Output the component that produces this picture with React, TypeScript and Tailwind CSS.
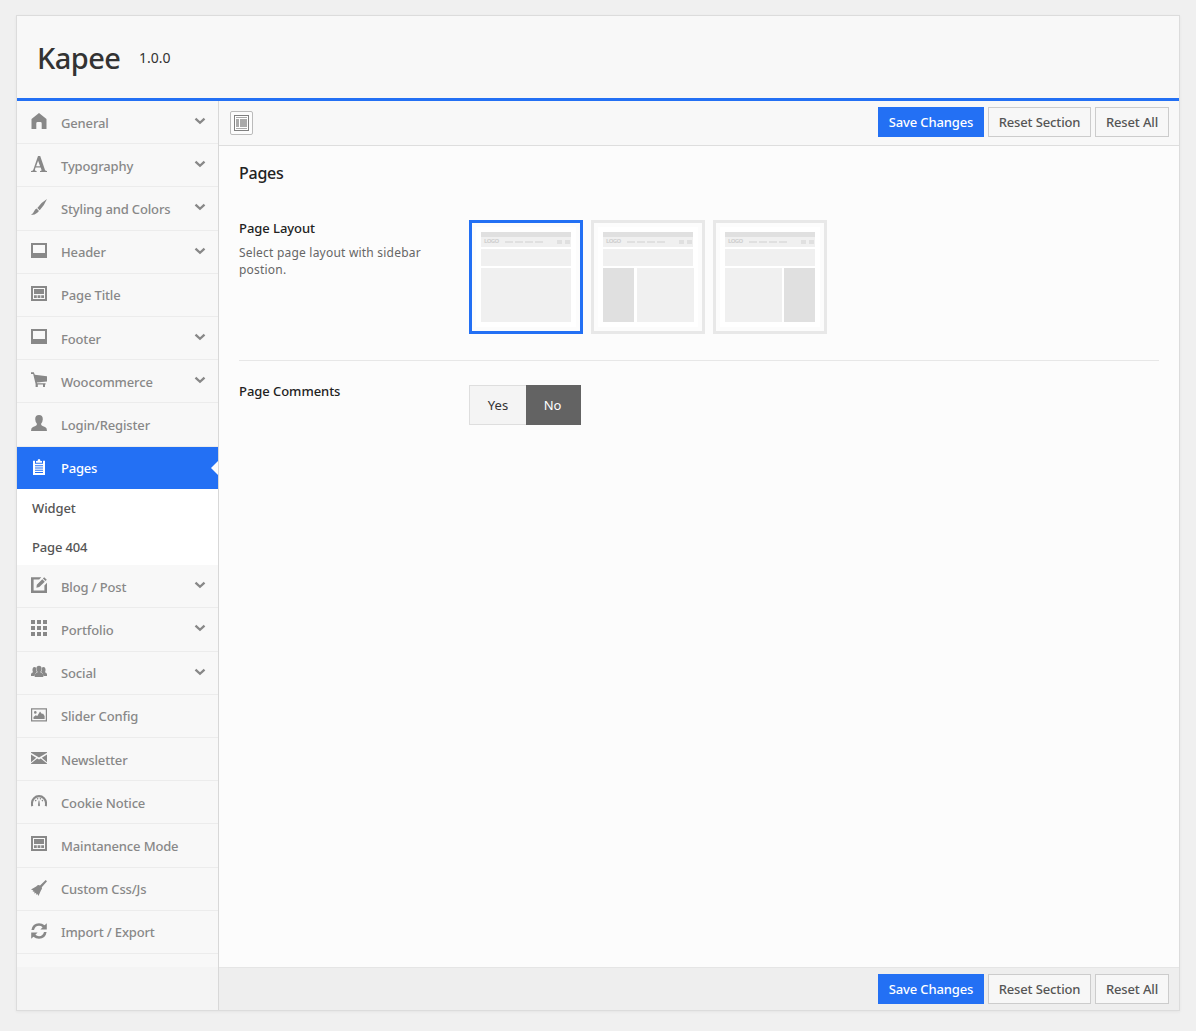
import type { ReactNode } from 'react';

const ICONS: Record<string, ReactNode> = {
  home: <path d="M8 0 0.5 6V16H5.3V10.4Q5.3 9 6.6 9H9.4Q10.7 9 10.7 10.4V16H15.5V6Z" />,
  font: (
    <path
      fillRule="evenodd"
      d="M7 0H9.2L14 14Q14.5 15 16 15.1V16H9V15.1Q10.9 15 10.5 14L9.7 11.4H4.6L4 13.2Q3.7 15 5.6 15.1V16H0V15.1Q1.8 15 2.4 13.4ZM7.1 4.8 5.1 10.2H9.1Z"
    />
  ),
  brush: <path d="M16 0Q13.7 5.8 8.7 11.2L6.3 8.9Q10.6 3.2 16 0ZM5.6 9.6 8 12 6.3 13.8Q4 16 0 16Q2.1 14.8 3.1 12.2Q4 10.3 5.6 9.6Z" />,
  website: <path fillRule="evenodd" d="M0 0H16V15H0ZM2 2V10H14V2Z" />,
  websiteAlt: (
    <path
      fillRule="evenodd"
      d="M0 0H16V15H0ZM2 2V13H14V2ZM3 3H13V8H3ZM3 9.3H5.8V12H3ZM6.6 9.3H9.4V12H6.6ZM10.2 9.3H13V12H10.2Z"
    />
  ),
  cart: (
    <path d="M0 0.3H2.8L3.8 2.8 16 4.2V9.6L5.8 10.4 6.2 11.3H14.6V12.6H14V15H12V12.6H6.8V15H4.6V12L2.2 2H0Z" />
  ),
  user: (
    <path d="M8 0Q11.8 0 11.8 4.2Q11.6 7 10.2 8.6V10Q11 11.2 14 12.1Q16 12.8 16 16H0Q0 12.8 2 12.1Q5 11.2 5.8 10V8.6Q4.4 7 4.2 4.2Q4.2 0 8 0Z" />
  ),
  clipboard: (
    <path
      fillRule="evenodd"
      d="M6.5 2Q6.7 0 8 0Q9.3 0 9.5 2H11V3.8H5V2ZM2 1.7H4V4.8H12V1.7H14V16H2ZM4 6.2V7.2H12V6.2ZM4 8.5V9.5H12V8.5ZM4 10.8V11.8H12V10.8ZM4 13.1V14.1H12V13.1Z"
    />
  ),
  edit: (
    <>
      <path d="M0 0.2H10.3L8.2 2.6H2.6V13.4H13.4V8.4L16 5.8V16H0Z" />
      <path d="M13.2 0.2 15.8 2.8 14.4 4.1 11.9 1.6ZM11.3 2.2 13.8 4.7 8.3 10.1 5.4 10.7 5.8 7.7Z" />
    </>
  ),
  grid: (
    <path d="M0 0H4V4H0ZM6 0H10V4H6ZM12 0H16V4H12ZM0 6H4V10H0ZM6 6H10V10H6ZM12 6H16V10H12ZM0 12H4V16H0ZM6 12H10V16H6ZM12 12H16V16H12Z" />
  ),
  group: (
    <>
      <path d="M3.4 3Q5 3 5.1 4.3Q5.2 7 6 8Q3.8 8.8 3.5 12H0V10.3Q0.2 8.8 2 8.3Q1.3 7 1.5 5Q1.8 3 3.4 3Z" />
      <path d="M12.6 3Q11 3 10.9 4.3Q10.8 7 10 8Q12.2 8.8 12.5 12H16V10.3Q15.8 8.8 14 8.3Q14.7 7 14.5 5Q14.2 3 12.6 3Z" />
      <path d="M8 1.8Q10.6 1.8 10.6 4.6Q10.5 6.8 9.6 7.5V8.4Q12.3 9.2 12.3 11V13H3.7V11Q3.7 9.2 6.4 8.4V7.5Q5.5 6.8 5.4 4.6Q5.4 1.8 8 1.8Z" />
    </>
  ),
  picture: (
    <>
      <path fillRule="evenodd" d="M0 1.2H16V14.4H0ZM1.2 2.4V13.2H14.8V2.4Z" />
      <circle cx="4.3" cy="5.4" r="1.3" />
      <path d="M2.5 12V10L4.7 8.2 6.3 9 9 4.6 11 7 12 6.6 13.6 9V12Z" />
    </>
  ),
  mail: <path d="M0 2H16V2.8L8 7.6 0 2.8ZM0 4.4 5.2 7.8 0 12.2ZM16 4.4V12.2L10.8 7.8ZM0 14V13.4L6.2 8.4 8 9.5 9.8 8.4 16 13.4V14Z" />,
  gauge: (
    <>
      <path d="M1.3 13.2Q0.8 11.8 1 10.1A7 7 0 0 1 15 10.1Q15.2 11.8 14.7 13.2" fill="none" stroke="currentColor" strokeWidth="2.1" />
      <circle cx="4.7" cy="7.6" r="0.8" />
      <circle cx="6.6" cy="5.8" r="0.8" />
      <circle cx="9.4" cy="5.8" r="0.8" />
      <circle cx="11.4" cy="7.6" r="0.8" />
      <path d="M7.6 7.6H8.4L9 12.2Q8.9 13.3 8 13.3Q7.1 13.3 7 12.2Z" />
    </>
  ),
  broom: <path d="M14.7 0 16 1.3 10.8 7.2Q11.6 8.8 9.9 10.4L7.5 16 6.5 14 5.6 15.1 5 13 3.3 13.4 3.5 11.7 1.6 11.5 2.4 10.4 0 9.4 5.2 6.4Q7.4 4.3 9 5.5Z" />,
  refresh: (
    <>
      <path d="M0.4 7Q1.4 0.3 8 0.2Q11.2 0.2 13.6 2.2L15.8 0.2V6.4H9.4L11.6 4.2Q10.1 2.8 8 2.8Q4 2.9 3 7Z" />
      <path d="M15.6 9Q14.6 15.7 8 15.8Q4.8 15.8 2.4 13.8L0.2 15.8V9.6H6.6L4.4 11.8Q5.9 13.2 8 13.2Q12 13.1 13 9Z" />
    </>
  ),
};

type Item = { icon: string; label: string; open?: boolean };

const TOP: Item[] = [
  { icon: 'home', label: 'General', open: true },
  { icon: 'font', label: 'Typography', open: true },
  { icon: 'brush', label: 'Styling and Colors', open: true },
  { icon: 'website', label: 'Header', open: true },
  { icon: 'websiteAlt', label: 'Page Title' },
  { icon: 'website', label: 'Footer', open: true },
  { icon: 'cart', label: 'Woocommerce', open: true },
  { icon: 'user', label: 'Login/Register' },
];

const BOTTOM: Item[] = [
  { icon: 'edit', label: 'Blog / Post', open: true },
  { icon: 'grid', label: 'Portfolio', open: true },
  { icon: 'group', label: 'Social', open: true },
  { icon: 'picture', label: 'Slider Config' },
  { icon: 'mail', label: 'Newsletter' },
  { icon: 'gauge', label: 'Cookie Notice' },
  { icon: 'websiteAlt', label: 'Maintanence Mode' },
  { icon: 'broom', label: 'Custom Css/Js' },
  { icon: 'refresh', label: 'Import / Export' },
];

function Icon({ name }: { name: string }) {
  return (
    <svg viewBox="0 0 16 16" className="mt-3 size-4 shrink-0 fill-current">
      {ICONS[name]}
    </svg>
  );
}

function Row({ item }: { item: Item }) {
  return (
    <li className="flex h-[43.2px] items-start border-b border-[#ececec] pr-3 pl-3.5 text-[#888]">
      <Icon name={item.icon} />
      <span className="mt-[11.6px] ml-3.5 flex-1 text-[13px] leading-5 font-medium tracking-[-0.15px] whitespace-nowrap">{item.label}</span>
      {item.open && (
        <svg viewBox="0 0 12 8" className="mt-4 h-2 w-3 fill-none stroke-current stroke-[2.3]">
          <path d="M1.5 1.6 6 5.8 10.5 1.6" />
        </svg>
      )}
    </li>
  );
}

function Actions() {
  return (
    <div className="flex gap-1 text-[13px] font-medium tracking-[-0.13px] whitespace-nowrap text-[#555]">
      <button className="h-[30px] w-[106px] bg-[#2370f4] pt-0.5 text-white">Save Changes</button>
      <button className="h-[30px] w-[103px] border border-[#ccc] bg-[#f7f7f7] pt-0.5">Reset Section</button>
      <button className="h-[30px] w-[74px] border border-[#ccc] bg-[#f7f7f7] pt-0.5">Reset All</button>
    </div>
  );
}

function Layout({ side, selected }: { side?: 'left' | 'right'; selected?: boolean }) {
  return (
    <div className={`size-[114px] border-3 p-1 ${selected ? 'border-[#2370f4]' : 'border-[#e8e8e8]'}`}>
      <div className="flex size-[100px] flex-col bg-white p-[5px]">
        <div className="h-[5px] bg-[#e0e0e0]" />
        <div className="flex h-2.5 items-center bg-[#f0f0f0] pr-px pl-[3px]">
          <span className="w-[17px] pb-0.5 text-[6px] leading-none font-bold tracking-[-0.6px] text-[#cfcfcf]">LOGO</span>
          <div className="ml-1 flex gap-0.5">
            {[0, 1, 2, 3].map((n) => (
              <i key={n} className="h-0.5 w-2 bg-[#e0e0e0]" />
            ))}
          </div>
          <div className="ml-auto flex gap-[3px]">
            <i className="h-1 w-[5px] bg-[#e0e0e0]" />
            <i className="h-1 w-[5px] bg-[#e0e0e0]" />
          </div>
        </div>
        <div className="mt-0.5 h-[17px] bg-[#f0f0f0]" />
        <div className={`mt-0.5 flex h-[54px] ${side === 'left' ? '-mr-px gap-[3px]' : 'gap-0.5'}`}>
          {side === 'left' && <div className="w-[31px] bg-[#e0e0e0]" />}
          <div className="flex-1 bg-[#f0f0f0]" />
          {side === 'right' && <div className="w-[31px] bg-[#e0e0e0]" />}
        </div>
      </div>
    </div>
  );
}

export default function App() {
  return (
    <div className="h-[1031px] bg-[#f0f0f0] px-4 pt-[15px] font-['Noto_Sans',sans-serif]">
      <div className="flex h-[996px] w-[1164px] flex-col border border-[#dcdcdc] bg-[#f8f8f8] shadow-[0_1px_3px_rgba(0,0,0,0.05)]">
        <header className="flex h-[85px] shrink-0 border-b-3 border-[#2370f4] pl-5">
          <h1 className="mt-[22px] w-[102px] text-[29px] leading-10 font-medium tracking-[-0.55px] text-[#333]">Kapee</h1>
          <span className="mt-8 text-sm leading-5 text-[#333]">1.0.0</span>
        </header>

        <div className="flex min-h-0 flex-1">
          <aside className="flex w-[202px] shrink-0 flex-col border-r border-[#d8d8d8]">
            <ul>
              {TOP.map((item) => (
                <Row key={item.label} item={item} />
              ))}
              <li className="h-[118.8px] bg-white">
                <div className="flex h-[42.4px] items-start bg-[#2370f4] pl-3.5 text-white">
                  <Icon name="clipboard" />
                  <span className="mt-[11.5px] ml-3.5 flex-1 text-[13px] leading-5 font-medium tracking-[-0.2px]">Pages</span>
                  <svg viewBox="0 0 7 14" className="mt-3.5 h-3.5 w-[7px] fill-[#fcfcfc]">
                    <path d="M7 0V14L0 7Z" />
                  </svg>
                </div>
                <div className="flex h-[38.6px] items-center pt-0.5 pl-[15px] text-[13px] font-medium tracking-[-0.1px] text-[#555]">Widget</div>
                <div className="flex h-[37.6px] items-center pt-0.5 pl-[15px] text-[13px] font-medium tracking-[-0.15px] text-[#555]">Page 404</div>
              </li>
              {BOTTOM.map((item) => (
                <Row key={item.label} item={item} />
              ))}
            </ul>
            <div className="mt-[12.8px] flex-1 bg-[#f4f4f4]" />
          </aside>

          <main className="flex flex-1 flex-col bg-[#fcfcfc]">
            <div className="flex h-[45px] items-start justify-between border-b border-[#dedede] bg-[#f8f8f8] pt-1.5 pr-2.5 pl-[11px]">
              <button className="mt-1 flex h-6 w-[23px] items-center justify-center rounded-xs border border-[#bbb] bg-[#fcfcfc]">
                <svg viewBox="0 0 15 16" className="h-4 w-[15px]">
                  <rect x="0.5" y="0.5" width="14" height="15" fill="#fff" stroke="#808080" />
                  <path d="M2 2H13V3H2ZM2 4H5V12H2ZM6 4H13V12H6ZM2 13H13V14H2Z" fill="#aaa" />
                </svg>
              </button>
              <Actions />
            </div>

            <section className="flex-1 px-5">
              <h2 className="mt-[15px] text-base leading-6 font-medium tracking-[-0.25px] text-[#222]">Pages</h2>
              <div className="mt-[35px] flex h-[141px] border-b border-[#e7e7e7]">
                <div className="w-[230px]">
                  <h3 className="text-[13px] leading-[17px] font-medium tracking-[-0.05px] text-[#222]">Page Layout</h3>
                  <p className="mt-[7px] w-[195px] text-xs leading-[17px] tracking-[0.21px] text-[#666]">Select page layout with sidebar postion.</p>
                </div>
                <div className="flex gap-2">
                  <Layout selected />
                  <Layout side="left" />
                  <Layout side="right" />
                </div>
              </div>
              <div className="mt-6 flex">
                <h3 className="-mt-[2px] w-[230px] text-[13px] leading-[17px] font-medium tracking-[-0.05px] text-[#222]">Page Comments</h3>
                <div className="flex h-10 text-[13px]">
                  <button className="w-[57px] border border-r-0 border-[#dedede] bg-[#f4f4f4] pt-0.5 text-[#333]">Yes</button>
                  <button className="w-[55px] bg-[#636363] pt-0.5 pr-0.5 text-white">No</button>
                </div>
              </div>
            </section>

            <footer className="flex h-[43px] items-start justify-end border-t border-[#e5e5e5] bg-[#eee] pt-1.5 pr-2.5">
              <Actions />
            </footer>
          </main>
        </div>
      </div>
    </div>
  );
}
